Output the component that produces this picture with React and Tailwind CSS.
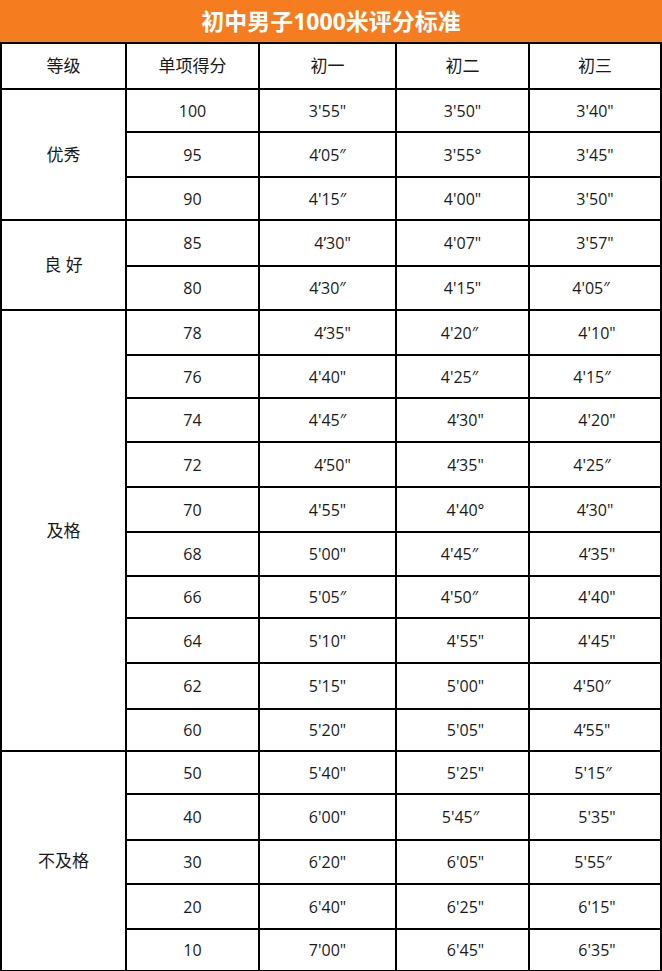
import React from "react";

const C = "";
const P5 = "pl-[10px]";
const P3 = "pl-[6px]";
const P2 = "pl-[4px]";
const M2 = "pr-[4px]";
const M3 = "pr-[6px]";
const M4 = "pr-[8px]";

const groups = [
  {
    label: "优秀",
    rows: [
      ["100", "h-[43px]", ["3'55\"", C], ["3'50\"", C], ["3'40\"", C]],
      ["95", "h-[45px]", ["4’05″", C], ["3'55°", C], ["3'45\"", C]],
      ["90", "h-[43px]", ["4'15″", C], ["4'00\"", C], ["3'50\"", C]],
    ],
  },
  {
    label: "良 好",
    rows: [
      ["85", "h-[46px]", ["4’30\"", P5], ["4'07\"", C], ["3'57\"", C]],
      ["80", "h-[44px]", ["4’30″", C], ["4'15\"", C], ["4'05″", M4]],
    ],
  },
  {
    label: "及格",
    rows: [
      ["78", "h-[45px]", ["4’35\"", P5], ["4'20″", M3], ["4'10\"", P2]],
      ["76", "h-[43px]", ["4'40\"", C], ["4'25″", M3], ["4'15″", M3]],
      ["74", "h-[44px]", ["4'45″", C], ["4’30\"", P3], ["4'20\"", P2]],
      ["72", "h-[45px]", ["4’50\"", P5], ["4’35\"", P3], ["4'25″", M3]],
      ["70", "h-[45px]", ["4'55\"", C], ["4'40°", P3], ["4’30\"", C]],
      ["68", "h-[44px]", ["5'00\"", C], ["4'45″", M3], ["4’35\"", P2]],
      ["66", "h-[42px]", ["5'05″", C], ["4'50″", M3], ["4'40\"", P2]],
      ["64", "h-[45px]", ["5'10\"", C], ["4'55\"", P3], ["4'45\"", P2]],
      ["62", "h-[46px]", ["5'15\"", C], ["5'00\"", P3], ["4'50″", M3]],
      ["60", "h-[42px]", ["5'20\"", C], ["5'05\"", P3], ["4’55\"", M3]],
    ],
  },
  {
    label: "不及格",
    rows: [
      ["50", "h-[43px]", ["5'40\"", C], ["5'25\"", P3], ["5'15″", M2]],
      ["40", "h-[46px]", ["6'00\"", C], ["5'45″", M2], ["5'35\"", P2]],
      ["30", "h-[44px]", ["6'20\"", C], ["6'05\"", P3], ["5'55″", M2]],
      ["20", "h-[45px]", ["6'40\"", C], ["6'25\"", P3], ["6'15\"", P2]],
      ["10", "h-[42px]", ["7'00\"", C], ["6'45\"", P3], ["6'35\"", P2]],
    ],
  },
];

const font = {
  fontFamily: '"Open Sans", "Noto Sans CJK SC", sans-serif',
};

export default function App() {
  return (
    <div className="w-[662px] bg-white" style={font}>
      <div className="h-[42px] bg-[#f57d1f] flex items-center justify-center text-white font-bold text-[23px]">
        初中男子1000米评分标准
      </div>
      <table className="border-collapse w-[660px] text-[16px] text-[#1a1a1a] table-fixed">
        <colgroup>
          <col className="w-[125px]" />
          <col className="w-[133px]" />
          <col className="w-[137px]" />
          <col className="w-[133px]" />
          <col className="w-[132px]" />
        </colgroup>
        <thead>
          <tr className="h-[46px]">
            {["等级", "单项得分", "初一", "初二", "初三"].map((h) => (
              <td key={h} className="border-2 border-black text-center align-middle p-0 font-normal text-[17px]">
                {h}
              </td>
            ))}
          </tr>
        </thead>
        <tbody>
          {groups.map((g) =>
            g.rows.map((r, i) => (
              <tr key={g.label + r[0]} className={r[1]}>
                {i === 0 && (
                  <td rowSpan={g.rows.length} className="border-2 border-black text-center align-middle p-0 whitespace-pre text-[17px]">
                    {g.label}
                  </td>
                )}
                <td className="border-2 border-black text-center align-middle p-0">{r[0]}</td>
                {[r[2], r[3], r[4]].map((c, j) => (
                  <td key={j} className={"border-2 border-black text-center align-middle p-0 " + c[1]}>
                    {c[0]}
                  </td>
                ))}
              </tr>
            ))
          )}
        </tbody>
      </table>
    </div>
  );
}
